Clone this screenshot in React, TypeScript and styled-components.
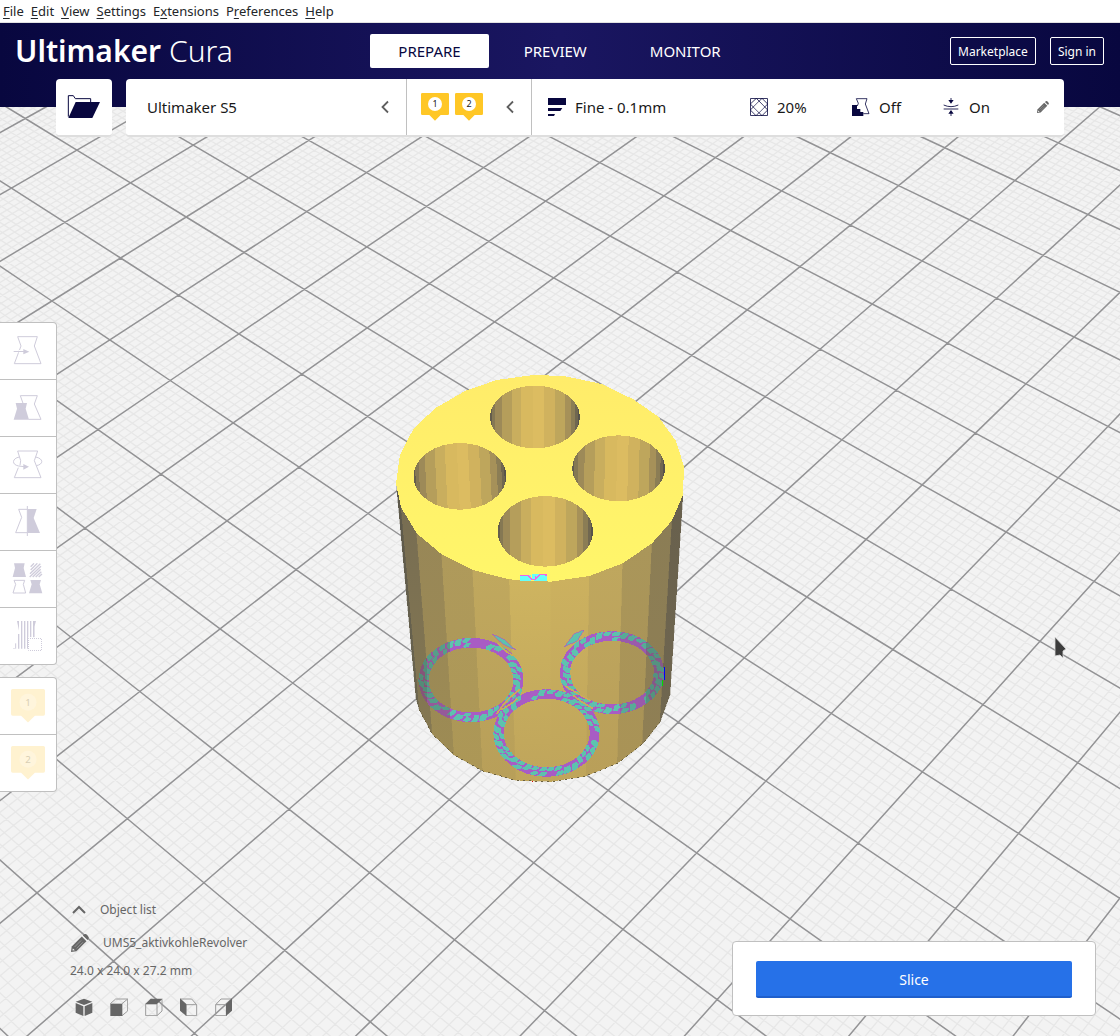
import React from "react";
import styled, { createGlobalStyle, css } from "styled-components";

const NAVY = "#08073f";
const GREY = "#666666";
const PALE = "#cfccdb";

const GlobalStyle = createGlobalStyle`
  *, *::before, *::after { box-sizing: border-box; }
  body { margin: 0; background: #f3f3f3; }
  body, button { font-family: "Noto Sans", "Open Sans", sans-serif; }
  button { margin: 0; padding: 0; border: 0; background: none; color: inherit; cursor: pointer; }
  svg { display: block; flex: none; }
`;

/* ---------- build plate geometry ---------- */

type Pt = [number, number];

// Perspective camera: plate coordinates (column, row) to canvas coordinates.
const CAM = [52.258, 67.192, 11.413, 29.995, -34.596, 188.057, -0.019318, 0.02227];

function project(u: number, v: number): Pt | null {
  const w = CAM[6] * u + CAM[7] * v + 1;
  if (w < 0.12) return null;
  return [(CAM[0] * u + CAM[1] * v + CAM[2]) / w, (CAM[3] * u + CAM[4] * v + CAM[5]) / w];
}

function plateLine(fixed: number, alongU: boolean): string {
  let d = "";
  let pen = false;
  for (let t = -16; t <= 26; t += 1) {
    const p = alongU ? project(t, fixed) : project(fixed, t);
    if (!p || Math.abs(p[0]) > 6000 || Math.abs(p[1]) > 6000) {
      pen = false;
      continue;
    }
    d += `${pen ? "L" : "M"}${p[0].toFixed(1)} ${p[1].toFixed(1)}`;
    pen = true;
  }
  return d;
}

let majorLines = "";
let minorLines = "";
for (let k = -120; k <= 220; k++) {
  const d = plateLine(k / 10, true) + plateLine(k / 10, false);
  if (k % 10 === 0) majorLines += d;
  else minorLines += d;
}

/* ---------- model ---------- */

const TOP: Pt[] = [
  [460, 45], [552, 48], [665, 72], [760, 118], [835, 170], [888, 243], [912, 320], [909, 405],
  [876, 482], [816, 550], [728, 610], [628, 648], [512, 665], [388, 658], [278, 630], [185, 583],
  [110, 520], [63, 442], [48, 370], [60, 285], [100, 207], [165, 145], [255, 93], [350, 60],
];

const FACETS: { a: Pt; b: Pt; c: Pt; d: Pt; hi: string; lo: string }[] = [
  { a: [48, 362], b: [63, 442], c: [118, 1050], d: [108, 1015], hi: "#5b574a", lo: "#6b654f" },
  { a: [63, 442], b: [110, 520], c: [157, 1122], d: [118, 1050], hi: "#776d52", lo: "#857852" },
  { a: [110, 520], b: [185, 583], c: [222, 1185], d: [157, 1122], hi: "#988757", lo: "#9d8b54" },
  { a: [185, 583], b: [278, 630], c: [308, 1233], d: [222, 1185], hi: "#af9a5b", lo: "#ac9756" },
  { a: [278, 630], b: [388, 658], c: [408, 1261], d: [308, 1233], hi: "#c0a85e", lo: "#b89f59" },
  { a: [388, 658], b: [512, 665], c: [512, 1265], d: [408, 1261], hi: "#ceb460", lo: "#bfa55b" },
  { a: [512, 665], b: [628, 648], c: [618, 1248], d: [512, 1265], hi: "#ccb15f", lo: "#bfa55b" },
  { a: [628, 648], b: [728, 610], c: [712, 1210], d: [618, 1248], hi: "#bfa75e", lo: "#b99f59" },
  { a: [728, 610], b: [816, 550], c: [787, 1153], d: [712, 1210], hi: "#aa965a", lo: "#a99356" },
  { a: [816, 550], b: [876, 482], c: [840, 1087], d: [787, 1153], hi: "#8b7d55", lo: "#8f7f54" },
  { a: [876, 482], b: [909, 405], c: [870, 1005], d: [840, 1087], hi: "#68604d", lo: "#706750" },
];

const HOLES = [
  { id: "back", cx: 465, cy: 171, rx: 135, ry: 94, tilt: 0 },
  { id: "left", cx: 240, cy: 349, rx: 139, ry: 100, tilt: -2 },
  { id: "right", cx: 716, cy: 325, rx: 139, ry: 99, tilt: 1 },
  { id: "front", cx: 496, cy: 514, rx: 143, ry: 106, tilt: 0 },
];

const HOLE_BANDS: [number, string][] = [
  [0.02, "#645d4c"], [0.06, "#857853"], [0.13, "#9d8a58"], [0.24, "#b59e5b"], [0.35, "#c9ae5e"],
  [0.48, "#d8b95f"], [0.6, "#dcbc61"], [0.72, "#d0b25e"], [0.83, "#bea65c"], [0.9, "#a69159"],
  [0.95, "#8b7d55"], [0.98, "#706750"], [1, "#57534a"],
];

const RINGS = [
  { id: "a", cx: 273, cy: 960, rx: 142, ry: 112, seed: 3 },
  { id: "b", cx: 696, cy: 938, rx: 141, ry: 110, seed: 11 },
  { id: "c", cx: 500, cy: 1119, rx: 144, ry: 117, seed: 23 },
];

const pts = (list: Pt[]) => list.map((p) => p.join(",")).join(" ");

function noise(n: number): number {
  const s = Math.sin(n * 127.1) * 43758.5453;
  return s - Math.floor(s);
}

// Broken, slanted patches where the two coplanar surfaces flicker through each other.
function ringCells(ring: (typeof RINGS)[number]): string {
  let d = "";
  const steps = 36;
  for (let i = 0; i < steps; i++) {
    const base = (i / steps) * Math.PI * 2;
    const n = noise(i + ring.seed * 7);
    const bands: [number, number][] =
      n > 0.6 ? [[-16, -2], [1, 16]] : n > 0.3 ? [[-6, 16]] : [[-16, 7]];
    bands.forEach(([r0, r1], k) => {
      if (noise(i * 5 + k * 9 + ring.seed) < 0.12) return;
      const w = 0.125 + 0.04 * noise(i * 3 + k + ring.seed);
      const skew = 0.04;
      const mid = (r0 + r1) / 2;
      const at = (a: number, r: number) =>
        `${(ring.cx + Math.cos(a) * (ring.rx + r)).toFixed(1)} ${(ring.cy + Math.sin(a) * (ring.ry + r * 0.85)).toFixed(1)}`;
      d += `M${at(base, r0)}L${at(base + w * 0.8, r0)}L${at(base + w, mid)}L${at(base + w + skew, r1)}L${at(base + skew + w * 0.2, r1)}L${at(base, mid)}Z`;
    });
  }
  return d;
}

const SceneSvg = styled.svg`
  position: absolute;
  inset: 0;
  width: 100%;
  height: 100%;
`;

function Model() {
  return (
    <g transform="translate(380 360) scale(0.33333)" shapeRendering="crispEdges">
      {FACETS.map((f, i) => (
        <polygon key={i} points={pts([f.a, f.b, f.c, f.d])} fill={`url(#facet${i})`} stroke={`url(#facet${i})`} />
      ))}
      <path
        d="M118 1050L157 1122L222 1185L308 1233L408 1261L512 1265L618 1248L712 1210L787 1153L840 1087"
        fill="none" stroke="#6b6142" strokeWidth="3" strokeDasharray="6 12"
      />
      {RINGS.map((r) => (
        <g key={r.id}>
          <ellipse cx={r.cx} cy={r.cy} rx={r.rx} ry={r.ry} fill="none" stroke="url(#violet)" strokeWidth="29" />
          <path d={ringCells(r)} fill="url(#teal)" />
        </g>
      ))}
      <path d="M336 822L372 838L407 870L368 852Z" fill="#5dc2ae" stroke="#a85cc4" strokeWidth="2" />
      <path d="M612 810L582 822L553 861L592 842Z" fill="#5dc2ae" stroke="#a85cc4" strokeWidth="2" />
      <path
        d="M350 1062Q376 1020 420 988M362 1050Q384 1040 412 1016M556 978Q590 1000 632 1022M580 1006Q600 1024 640 1046M352 848Q385 886 408 888"
        fill="none" stroke="#c9ab5c" strokeWidth="5"
      />
      <polygon points={pts(TOP)} fill="url(#lid)" />
      {HOLES.map((h) => (
        <ellipse key={h.id} cx={h.cx} cy={h.cy} rx={h.rx} ry={h.ry} fill={`url(#hole-${h.id})`} />
      ))}
      <path d="M420 645H452V657H456V642H501V662H462V658H452V664H420Z" fill="#66fff8" />
      <path d="M420 646H442L456 658H466V648M466 656L480 644H498V649" fill="none" stroke="#f065e6" strokeWidth="4" />
      <path d="M853 920V960" stroke="#0000ff" strokeWidth="4" />
      <path d="M848 960V978" stroke="#00dc00" strokeWidth="4" />
      <path d="M456 1264H460" stroke="#e00000" strokeWidth="3" />
    </g>
  );
}

function Scene() {
  return (
    <SceneSvg viewBox="0 0 1120 1036" preserveAspectRatio="xMidYMid slice" aria-hidden="true">
      <defs>
        {FACETS.map((f, i) => (
          <linearGradient key={i} id={`facet${i}`} x1="0" y1="0" x2="0" y2="1">
            <stop offset="0" stopColor={f.hi} />
            <stop offset="1" stopColor={f.lo} />
          </linearGradient>
        ))}
        {HOLES.map((h) => (
          <linearGradient key={h.id} id={`hole-${h.id}`} gradientTransform={`rotate(${h.tilt} 0.5 0.5)`}>
            {HOLE_BANDS.map(([end, color], i) => [
              <stop key={`${i}s`} offset={i ? HOLE_BANDS[i - 1][0] : 0} stopColor={color} />,
              <stop key={`${i}e`} offset={end} stopColor={color} />,
            ])}
          </linearGradient>
        ))}
        <linearGradient id="lid" x1="0" y1="0" x2="0" y2="1">
          <stop offset="0" stopColor="#ffec6a" />
          <stop offset="1" stopColor="#fff66a" />
        </linearGradient>
        <linearGradient id="violet" gradientUnits="userSpaceOnUse" x1="0" y1="0" x2="960" y2="0">
          <stop offset="0.148" stopColor="#855578" />
          <stop offset="0.148" stopColor="#955a9a" />
          <stop offset="0.219" stopColor="#955a9a" />
          <stop offset="0.219" stopColor="#a85cc4" />
          <stop offset="0.75" stopColor="#a85cc4" />
          <stop offset="0.75" stopColor="#9a5aac" />
          <stop offset="0.83" stopColor="#9a5aac" />
          <stop offset="0.83" stopColor="#855a88" />
        </linearGradient>
        <linearGradient id="teal" gradientUnits="userSpaceOnUse" x1="0" y1="0" x2="960" y2="0">
          <stop offset="0.148" stopColor="#548b78" />
          <stop offset="0.148" stopColor="#579d89" />
          <stop offset="0.219" stopColor="#579d89" />
          <stop offset="0.219" stopColor="#5dc2ae" />
          <stop offset="0.75" stopColor="#5dc2ae" />
          <stop offset="0.75" stopColor="#58aa97" />
          <stop offset="0.83" stopColor="#58aa97" />
          <stop offset="0.83" stopColor="#559280" />
        </linearGradient>
      </defs>
      <rect width="1120" height="1036" fill="#f3f3f3" />
      <path d={minorLines} fill="none" stroke="#e7e7e7" strokeWidth="1.3" />
      <path d={majorLines} fill="none" stroke="#939395" strokeWidth="1.5" />
      <Model />
      <path d="M1055 637L1066 649L1063 651L1063 658L1060 655L1055 656Z" fill="#3c3c3c" stroke="#d8d8d8" strokeWidth="0.8" />
    </SceneSvg>
  );
}

/* ---------- chrome ---------- */

const Window = styled.div`
  position: relative;
  display: flex;
  flex-direction: column;
  min-height: 100vh;
  overflow: hidden;
`;

const MenuBar = styled.nav`
  position: relative;
  display: flex;
  height: 23px;
  padding-left: 3px;
  gap: 7px;
  background: #ffffff;
  border-bottom: 1px solid #e2e2e2;
`;

const MenuItem = styled.button`
  font-size: 13px;
  line-height: 22px;
  color: #232629;
  u { text-underline-offset: 2px; }
`;

const Header = styled.header`
  position: relative;
  height: 84px;
  padding: 0 16px 0 15px;
  background: linear-gradient(90deg, #08073f 0%, #1a1661 50%, #08073f 100%);
`;

const HeaderRow = styled.div`
  display: grid;
  grid-template-columns: 1fr auto 1fr;
  align-items: center;
  height: 56px;
`;

const Logo = styled.div`
  color: #ffffff;
  font-size: 30px;
  line-height: 40px;
  font-weight: 300;
  white-space: nowrap;
  strong { font-weight: 600; }
`;

const Tabs = styled.nav`
  display: flex;
  gap: 7px;
`;

const Tab = styled.button<{ $active?: boolean }>`
  height: 34px;
  padding: 0 28px;
  border-radius: 2px;
  font-size: 15px;
  color: ${(p) => (p.$active ? NAVY : "#ffffff")};
  background: ${(p) => (p.$active ? "#ffffff" : "transparent")};
`;

const HeaderActions = styled.div`
  display: flex;
  justify-content: flex-end;
  gap: 14px;
`;

const OutlineButton = styled.button`
  height: 28px;
  padding: 0 7px;
  border: 1px solid #ffffff;
  border-radius: 2px;
  font-size: 12px;
  color: #ffffff;
`;

const StageBar = styled.div`
  position: relative;
  display: flex;
  gap: 14px;
  margin: -28px 56px 0;
`;

const raised = css`
  height: 58px;
  background: #ffffff;
  border-bottom: 2px solid #dedede;
  border-radius: 4px;
`;

const OpenButton = styled.button`
  ${raised}
  display: flex;
  align-items: center;
  justify-content: center;
  width: 56px;
`;

const StagePanel = styled.div`
  ${raised}
  display: flex;
  flex: 1;
  font-size: 15px;
  color: #191919;
`;

const panelSection = css`
  display: flex;
  align-items: center;
  font-size: 15px;
`;

const MachineButton = styled.button`
  ${panelSection}
  justify-content: space-between;
  width: 281px;
  padding: 0 17px 0 21px;
  border-right: 1px solid #c0c0c0;
`;

const ExtruderButton = styled.button`
  ${panelSection}
  gap: 6px;
  width: 125px;
  padding: 0 17px 0 14px;
  border-right: 1px solid #c0c0c0;
  svg:last-child { margin-left: auto; }
`;

const SettingsButton = styled.button`
  display: grid;
  grid-template-columns: 1fr 102px 90px 95px 12px;
  align-items: center;
  flex: 1;
  padding: 0 15px 0 16px;
  font-size: 15px;
`;

const Setting = styled.span`
  display: flex;
  align-items: center;
  gap: 9px;
`;

const Workspace = styled.main`
  position: relative;
  display: flex;
  flex: 1;
  flex-direction: column;
  padding-top: 185px;
`;

const ToolRail = styled.div`
  display: flex;
  flex-direction: column;
  align-items: flex-start;
  gap: 12px;
`;

const ToolGroup = styled.div`
  width: 57px;
  background: #ffffff;
  border: 1px solid #c0c0c0;
  border-left: 0;
  border-radius: 0 4px 4px 0;
`;

const ToolButton = styled.button`
  display: flex;
  align-items: center;
  justify-content: center;
  width: 56px;
  height: 57px;
  & + & { border-top: 1px solid #c0c0c0; }
  &:first-child { height: 56px; }
`;

const BottomRow = styled.div`
  display: flex;
  align-items: flex-end;
  justify-content: space-between;
  margin-top: auto;
  padding: 0 24px 20px 70px;
`;

const ObjectInfo = styled.section`
  display: flex;
  flex-direction: column;
  align-items: flex-start;
  color: ${GREY};
  font-size: 12px;
  line-height: 16px;
`;

const ObjectListToggle = styled.button`
  display: flex;
  align-items: center;
  gap: 13px;
  padding-left: 1px;
  margin-bottom: 16px;
  font-size: 12px;
  line-height: 16px;
`;

const NameButton = styled(ObjectListToggle)`
  gap: 14px;
  margin-bottom: 11px;
`;

const ViewButtons = styled.div`
  display: flex;
  gap: 17px;
  margin-top: 19px;
  padding-left: 5px;
`;

const ActionPanel = styled.section`
  width: 364px;
  padding: 19px 23px 17px;
  background: #ffffff;
  border: 1px solid #c0c0c0;
  border-radius: 4px;
`;

const SliceButton = styled.button`
  width: 100%;
  height: 37px;
  padding-top: 2px;
  border-bottom: 2px solid #1f5fcb;
  border-radius: 2px;
  background: #2671e8;
  color: #ffffff;
  font-size: 14px;
`;

/* ---------- icons ---------- */

function Icon(props: { box: string; w: number; h?: number; children: React.ReactNode }) {
  return (
    <svg width={props.w} height={props.h ?? props.w} viewBox={props.box} fill="none" aria-hidden="true">
      {props.children}
    </svg>
  );
}

const ChevronLeft = () => (
  <Icon box="0 0 8 14" w={8} h={14}>
    <path d="M7 1.5L1.5 7L7 12.5" stroke="#5f5f5f" strokeWidth="1.8" />
  </Icon>
);

function Marker({ n, size, faded }: { n: number; size: number; faded?: boolean }) {
  return (
    <Icon box="0 0 84 84" w={size}>
      <path
        d="M4 0H80Q84 0 84 4V62Q84 66 80 66H59L42 83L25 66H4Q0 66 0 62V4Q0 0 4 0Z"
        fill={faded ? "#fff2d0" : "#ffc726"}
      />
      <circle cx="42" cy="33" r="21" fill={faded ? "#fff5dc" : "#ffffff"} />
      <text
        x="42" y={faded ? 41 : 42} textAnchor="middle" fill={faded ? "#d9cfb4" : "#191919"}
        fontFamily="Noto Sans, sans-serif" fontSize={faded ? 24 : 27}
      >
        {n}
      </text>
    </Icon>
  );
}

const Pencil = ({ size }: { size: number }) => (
  <Icon box="0 0 50 50" w={size}>
    <path d="M0 50L2 35L30 7L43 20L15 48Z" fill={GREY} />
    <path d="M33 4L37 1Q41 -1 45 3L48 7Q51 11 48 14L46 17Z" fill={GREY} />
    <path d="M10 36L28 18M16 40L33 23" stroke="#a8a8a8" strokeWidth="2" />
    <path d="M5 40L11 45L4 46Z" fill="#f3f3f3" />
  </Icon>
);

const tools: { name: string; icon: React.ReactNode }[] = [
  {
    name: "Move",
    icon: (
      <Icon box="36 75 96 96" w={32}>
        <path d="M53 80H112L103 108L123 161H43L63 108Z" stroke={PALE} strokeWidth="3" />
        <path d="M56 125H66" stroke="#ffffff" strokeWidth="10" />
        <path d="M41 124.500H72" stroke={PALE} strokeWidth="3" />
        <path d="M70 117L88 125L70 133Z" fill={PALE} />
      </Icon>
    ),
  },
  {
    name: "Scale",
    icon: (
      <Icon box="36 246 96 96" w={32}>
        <path d="M69 280L61 257H112L103 282L123 328H86" stroke={PALE} strokeWidth="3" />
        <path d="M47 279H81L77 296L87 329H41L51 296Z" fill={PALE} />
      </Icon>
    ),
  },
  {
    name: "Rotate",
    icon: (
      <Icon box="36 417 96 96" w={32}>
        <path d="M60 466L62 452L53 423H113L103 452L123 503H43L55 473" stroke={PALE} strokeWidth="3" />
        <path d="M58 441C36 445 34 464 56 468L72 470M107 441C131 446 131 463 109 467" stroke={PALE} strokeWidth="3" />
        <path d="M70 462L87 470L70 479Z" fill={PALE} />
      </Icon>
    ),
  },
  {
    name: "Mirror",
    icon: (
      <Icon box="36 588 96 96" w={32}>
        <path d="M82 598H56L65 622L47 668H82M82 588V678" stroke={PALE} strokeWidth="3" />
        <path d="M82 597H110L101 624L120 669H82Z" fill={PALE} />
      </Icon>
    ),
  },
  {
    name: "Per Model Settings",
    icon: (
      <Icon box="36 39 96 96" w={32}>
        <path d="M42 40H74L71 54L78 81H38L45 54ZM91 90H123L119 103L127 130H87L95 103Z" fill={PALE} />
        <path d="M42 91H74L70 103L77 129H39L47 103Z" stroke={PALE} strokeWidth="3" />
        <path d="M92 50L102 40M92 60L112 40M90 71L121 41M89 81L123 49M98 81L122 58M107 81L124 65M116 81L126 72" stroke={PALE} strokeWidth="4" />
      </Icon>
    ),
  },
  {
    name: "Support Blocker",
    icon: (
      <Icon box="36 210 96 96" w={32}>
        <path d="M51 213H57V242ZM99 213H108L103 230V262H99Z" fill={PALE} />
        <path d="M65 213V296M74 213V296M83 213V296M92 213V262M56 252V296M101 213V262" stroke={PALE} strokeWidth="4" />
        <path d="M47 280V296M42 294V297" stroke={PALE} strokeWidth="3" />
        <path d="M84 262H126V303H84Z" fill="#ffffff" />
        <path
          d="M85.500 265.500H124.500V301.500H85.500Z"
          stroke={PALE} strokeWidth="3" strokeDasharray="3 3" strokeDashoffset="1.5"
        />
      </Icon>
    ),
  },
];

const views: { name: string; icon: React.ReactNode }[] = [
  {
    name: "3D view",
    icon: (
      <Icon box="105 356 54 54" w={18}>
        <path d="M132 358L157 367L132 377L107 367ZM107 371L130 381V410L107 400ZM157 371L134 381V410L157 400Z" fill={GREY} />
      </Icon>
    ),
  },
  {
    name: "Front view",
    icon: (
      <Icon box="210 356 54 54" w={18}>
        <path d="M211 373L227 359H263V395L246 409M246 373L263 359" stroke="#9c9c9c" strokeWidth="3" />
        <path d="M211 373H247V410H211Z" fill={GREY} />
      </Icon>
    ),
  },
  {
    name: "Top view",
    icon: (
      <Icon box="315 356 54 54" w={18}>
        <path d="M317 374H351V409H317ZM366 360V395L351 409" stroke="#9c9c9c" strokeWidth="3" />
        <path d="M316 374L332 358H368L351 374Z" fill={GREY} />
      </Icon>
    ),
  },
  {
    name: "Left view",
    icon: (
      <Icon box="420 356 54 54" w={18}>
        <path d="M421 359H455L470 376M438 376H470V409H438Z" stroke="#9c9c9c" strokeWidth="3" />
        <path d="M420 357L439 374V410L420 394Z" fill={GREY} />
      </Icon>
    ),
  },
  {
    name: "Right view",
    icon: (
      <Icon box="525 356 54 54" w={18}>
        <path d="M527 376H559V409H527ZM527 376L543 359H575" stroke="#9c9c9c" strokeWidth="3" />
        <path d="M576 357V394L558 410V374Z" fill={GREY} />
      </Icon>
    ),
  },
];

const menus: [string, string, string][] = [
  ["", "F", "ile"],
  ["", "E", "dit"],
  ["", "V", "iew"],
  ["", "S", "ettings"],
  ["E", "x", "tensions"],
  ["P", "r", "eferences"],
  ["", "H", "elp"],
];

export default function App() {
  return (
    <Window>
      <GlobalStyle />
      <Scene />
      <MenuBar aria-label="Menu">
        {menus.map(([pre, key, post]) => (
          <MenuItem key={post}>
            {pre}
            <u>{key}</u>
            {post}
          </MenuItem>
        ))}
      </MenuBar>
      <Header>
        <HeaderRow>
          <Logo>
            <strong>Ultimaker</strong> Cura
          </Logo>
          <Tabs aria-label="Stage">
            <Tab $active>PREPARE</Tab>
            <Tab>PREVIEW</Tab>
            <Tab>MONITOR</Tab>
          </Tabs>
          <HeaderActions>
            <OutlineButton>Marketplace</OutlineButton>
            <OutlineButton>Sign in</OutlineButton>
          </HeaderActions>
        </HeaderRow>
      </Header>
      <StageBar>
        <OpenButton aria-label="Open file">
          <Icon box="201 285 102 72" w={34} h={24}>
            <path d="M205 350V287H220L226 296H272V306" stroke={NAVY} strokeWidth="3" />
            <path d="M227 306H300L277 354H205Z" fill={NAVY} />
          </Icon>
        </OpenButton>
        <StagePanel>
          <MachineButton>
            Ultimaker S5
            <ChevronLeft />
          </MachineButton>
          <ExtruderButton aria-label="Extruders">
            <Marker n={1} size={28} />
            <Marker n={2} size={28} />
            <ChevronLeft />
          </ExtruderButton>
          <SettingsButton>
            <Setting>
              <Icon box="525 294 54 54" w={18}>
                <path d="M525 294H579V315H525ZM525 324H568L562 333H525ZM525 342H546L543 348H525Z" fill={NAVY} />
              </Icon>
              Fine - 0.1mm
            </Setting>
            <Setting>
              <Icon box="12 294 54 54" w={18}>
                <path
                  d="M13.5 295.5H64.5V346.5H13.5ZM13 312L31 295M13 330L48 295M30 347L65 312M48 347L65 330M31 295L65 330M48 295L65 312M13 312L48 347M13 330L30 347"
                  stroke={NAVY} strokeWidth="2.4"
                />
                <path d="M39 306L54 321L39 336L24 321Z" fill="#ffffff" />
              </Icon>
              20%
            </Setting>
            <Setting>
              <Icon box="318 294 54 54" w={18}>
                <path d="M334 318L337 310L331 296H363L358 312L369 341H352" stroke={NAVY} strokeWidth="2.4" />
                <path d="M318 315H333V327H343V336H352V348H318Z" fill={NAVY} />
              </Icon>
              Off
            </Setting>
            <Setting>
              <Icon box="588 294 54 54" w={18}>
                <path d="M593 315Q615 325 637 315M593 327H637M615 294V306M615 336V348" stroke={NAVY} strokeWidth="2.6" />
                <path d="M607 300H623L615 311ZM607 341H623L615 330Z" fill={NAVY} />
              </Icon>
              On
            </Setting>
            <Pencil size={12} />
          </SettingsButton>
        </StagePanel>
      </StageBar>
      <Workspace>
        <ToolRail>
          <ToolGroup>
            {tools.map((t) => (
              <ToolButton key={t.name} aria-label={t.name}>
                {t.icon}
              </ToolButton>
            ))}
          </ToolGroup>
          <ToolGroup>
            <ToolButton aria-label="Extruder 1">
              <Marker n={1} size={34} faded />
            </ToolButton>
            <ToolButton aria-label="Extruder 2">
              <Marker n={2} size={34} faded />
            </ToolButton>
          </ToolGroup>
        </ToolRail>
        <BottomRow>
          <ObjectInfo>
            <ObjectListToggle>
              <Icon box="0 0 16 10" w={16} h={10}>
                <path d="M2 8L8 2L14 8" stroke={GREY} strokeWidth="2" />
              </Icon>
              Object list
            </ObjectListToggle>
            <NameButton>
              <Pencil size={18} />
              UMS5_aktivkohleRevolver
            </NameButton>
            <span>24.0 x 24.0 x 27.2 mm</span>
            <ViewButtons>
              {views.map((v) => (
                <button key={v.name} aria-label={v.name}>
                  {v.icon}
                </button>
              ))}
            </ViewButtons>
          </ObjectInfo>
          <ActionPanel>
            <SliceButton>Slice</SliceButton>
          </ActionPanel>
        </BottomRow>
      </Workspace>
    </Window>
  );
}
